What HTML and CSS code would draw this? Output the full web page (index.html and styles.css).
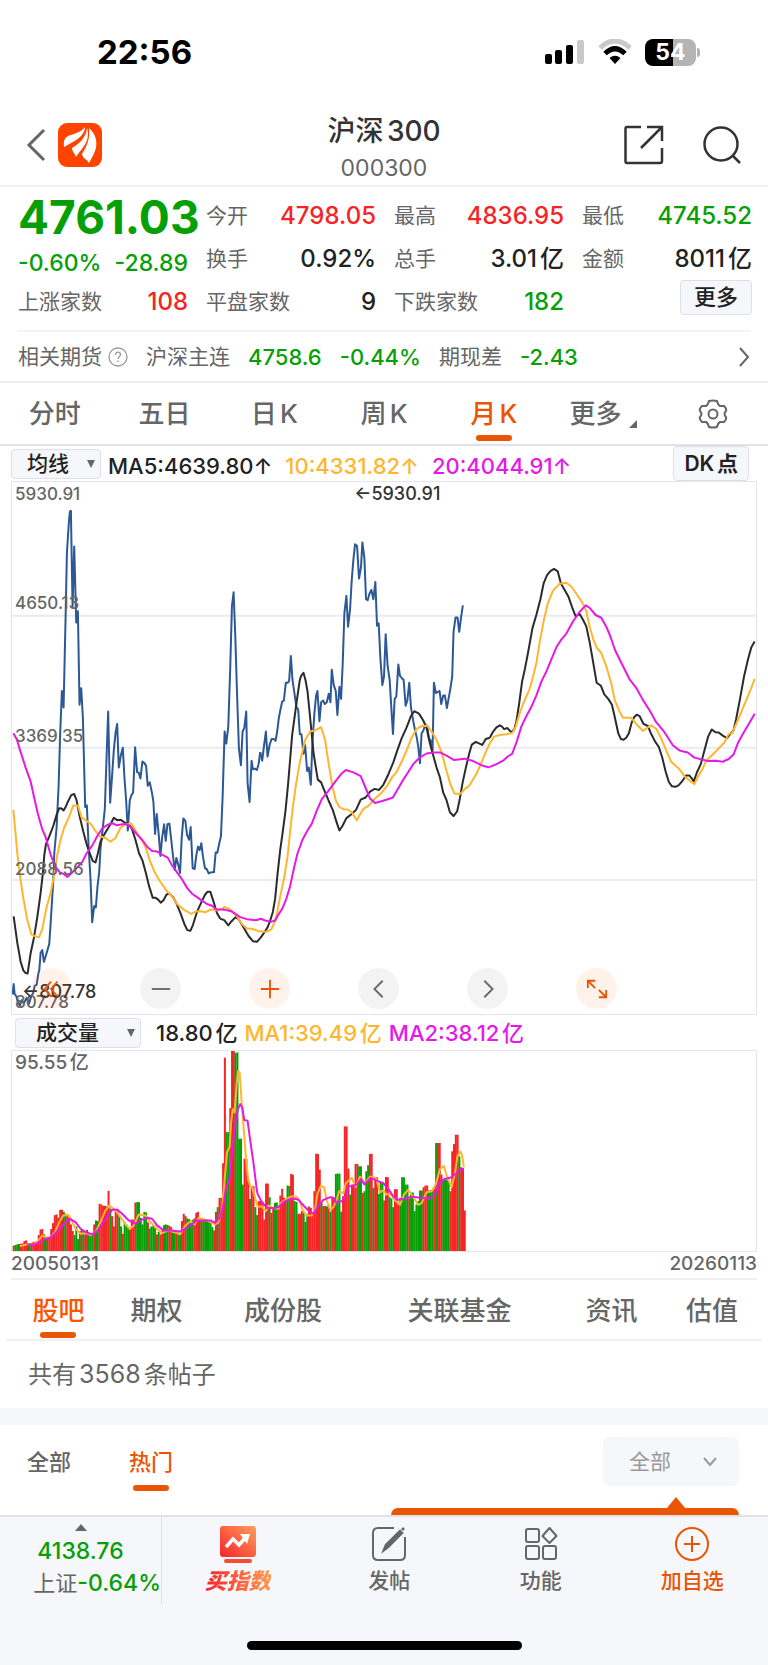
FILE: index.html
```html
<!DOCTYPE html>
<html lang="zh-CN">
<head>
    <meta charset="UTF-8">
    <meta name="viewport" content="width=device-width, initial-scale=1.0">
    <title>沪深300</title>
    <link rel="stylesheet" href="styles.css">
</head>
<body>
    <div class="status-bar">
        <span class="clock">22:56</span>
        <div class="status-icons">
            <svg width="40" height="26" viewBox="0 0 40 26">
                <rect x="0" y="15" width="7" height="10" rx="2"/>
                <rect x="10" y="11" width="7" height="14" rx="2"/>
                <rect x="21" y="6" width="7" height="19" rx="2"/>
                <rect x="32" y="1" width="7" height="24" rx="2" fill="#c9c9c9"/>
            </svg>
            <svg width="34" height="26" viewBox="0 0 34 26">
                <path d="M2 9 Q17 -5 32 9" fill="none" stroke="#c9c9c9" stroke-width="5"/>
                <path d="M7 14.500 Q17 5 27 14.500" fill="none" stroke="#000" stroke-width="5"/>
                <path d="M17 25 L11.500 19 Q17 14.500 22.500 19 Z"/>
            </svg>
            <div class="battery"><span>54</span></div>
        </div>
    </div>

    <header class="header">
        <div class="header-side">
            <button class="icon-btn" aria-label="返回">
                <svg width="20" height="34" viewBox="0 0 20 34" fill="none" stroke="#666" stroke-width="3"><path d="M18 2 L3 17 L18 32"/></svg>
            </button>
            <svg width="44" height="44" viewBox="0 0 44 44">
                <rect width="44" height="44" rx="9" fill="#ff4400"/>
                <path d="M6 24 C5 14 9 13 16 11 C21 9 25 7 27 4 C27 13 17 18 6 24 Z M14 25 C24 19 28 13 29 5 C33 18 24 25 18 34 C17 30 14 29 14 25 Z M24 31 C30 21 32 15 31 5 C38 11 40 20 37 28 C35 33 33 36 31 40 C29 36 25 36 24 31 Z" fill="#fff"/>
            </svg>
        </div>
        <div class="header-title">
            <h1>沪深300</h1>
            <p>000300</p>
        </div>
        <div class="header-side header-actions">
            <button class="icon-btn" aria-label="分享">
                <svg width="40" height="40" viewBox="0 0 40 40" fill="none" stroke="#333" stroke-width="2.500"><path d="M17 2 H3 Q1.500 2 1.500 4 V36 Q1.500 38 3 38 H36 Q38 38 38 36 V23 M23 2 H38 V16 M38 2 L17 23"/></svg>
            </button>
            <button class="icon-btn" aria-label="搜索">
                <svg width="40" height="40" viewBox="0 0 40 40" fill="none" stroke="#333" stroke-width="2.500"><circle cx="19" cy="19" r="16.500"/><path d="M31 31 L38 38"/></svg>
            </button>
        </div>
    </header>

    <section class="quote">
        <div class="quote-main">
            <strong class="price down">4761.03</strong>
            <div class="change down"><span>-0.60%</span><span>-28.89</span></div>
        </div>
        <div class="item"><span>今开</span><b class="up">4798.05</b></div>
        <div class="item"><span>最高</span><b class="up">4836.95</b></div>
        <div class="item"><span>最低</span><b class="down">4745.52</b></div>
        <div class="item"><span>换手</span><b>0.92%</b></div>
        <div class="item"><span>总手</span><b>3.01亿</b></div>
        <div class="item"><span>金额</span><b>8011亿</b></div>
        <div class="item"><span>上涨家数</span><b class="up">108</b></div>
        <div class="item"><span>平盘家数</span><b>9</b></div>
        <div class="item"><span>下跌家数</span><b class="down">182</b></div>
        <div class="item item-more"><button class="box-btn">更多</button></div>
    </section>

    <a class="futures" href="#">
        <span class="futures-name">相关期货
            <svg width="20" height="20" viewBox="0 0 20 20" fill="none" stroke="#999" stroke-width="1.300"><circle cx="10" cy="10" r="9"/><path d="M7.500 8 C7.500 4 12.500 4.500 12.500 7.500 C12.500 9.500 10 9.500 10 12 M10 13.500 V15"/></svg>
        </span>
        <span>沪深主连</span>
        <b class="down">4758.6</b>
        <b class="down">-0.44%</b>
        <span>期现差</span>
        <b class="down">-2.43</b>
        <svg class="futures-arrow" width="12" height="20" viewBox="0 0 12 20" fill="none" stroke="#666" stroke-width="2"><path d="M2 1 L10 10 L2 19"/></svg>
    </a>

    <nav class="period-tabs">
        <a href="#">分时</a>
        <a href="#">五日</a>
        <a href="#">日K</a>
        <a href="#">周K</a>
        <a href="#" class="active">月K</a>
        <a href="#" class="period-more">更多<svg width="8" height="8" viewBox="0 0 8 8"><path d="M8 0 V8 H0 Z" fill="#666"/></svg></a>
        <button class="icon-btn" aria-label="设置">
            <svg width="30" height="30" viewBox="0 0 30 30" fill="none" stroke="#666" stroke-width="2"><path d="M11 2 Q15 1 19 2 Q20 6 22 7 L26 7 Q29 10 28 12 Q25 15 28 18 Q29 20 26 23 L22 23 Q20 24 19 28 Q15 29 11 28 Q10 24 8 23 L4 23 Q1 20 2 18 Q5 15 2 12 Q1 10 4 7 L8 7 Q10 6 11 2 Z"/><circle cx="15" cy="15" r="4.500"/></svg>
        </button>
    </nav>

    <main class="charts">
        <div class="chart-head ma-head">
            <label class="select-box select-ma">
                <select aria-label="主图指标"><option>均线</option></select>
            </label>
            <span class="legend">MA5:4639.80↑</span>
            <span class="legend ma10">10:4331.82↑</span>
            <span class="legend ma20">20:4044.91↑</span>
            <button class="box-btn dk-btn">DK点</button>
        </div>

        <div class="price-chart">
            <svg class="plot" viewBox="34 4 2236 1548" preserveAspectRatio="none">
                <path class="grid-line" d="M34 393 H2270 M34 777 H2270 M34 1162 H2270"/>
                <g class="line close">
                    <polyline points="36,1495 39,1465 42,1495 47,1500 52,1520 58,1527 62,1512 70,1520 78,1505 85,1522 92,1500 98,1490 102,1470 108,1467 113,1435 116,1425 120,1374 125,1366 130,1400 137,1378 146,1348 150,1290 158,1165 161,1085 168,1010 174,890 179,730 184,612 189,660 195,400 199,210 205,120 208,90 211,88 216,368 221,192 227,413 232,380 237,652 242,604 247,690 254,950 259,945 264,1060 270,1160 275,1285 281,1238 286,1242 291,1180 296,1140 300,1070 307,1010 313,955 318,810 323,672 329,937 334,870 340,785 345,735 350,708 355,835 361,800 367,777 372,865 377,930 382,1018 388,930 393,915 398,908 404,776 410,848 415,850 420,867 426,817 432,822 437,830 442,888 448,878 455,910 459,935 464,1028 469,970 475,1030 480,1092 485,1040 491,1000 496,1048 501,1000 507,998 512,1040 517,1085 523,1133 528,1098 533,1115 539,1142 544,1040 549,983 555,990 560,1030 566,1045 571,1008 577,1128 583,1130 588,1090 593,1065 598,1075 603,1055 608,1095 614,1128 619,1130 625,1143 631,1140 641,1139 646,1082 651,1083 657,1055 662,1035 667,920 673,730 678,765 684,715 690,540 695,365 700,325 705,450 710,610 716,780 722,828 727,730 732,720 738,672 742,880 748,935 754,815 758,840 764,838 770,842 775,825 780,790"/>
                    <polyline transform="translate(660 0)" points="120,790 126,815 131,775 137,730 142,803 148,770 154,752 160,752 166,757 171,730 176,690 181,665 186,643 191,640 197,588 203,588 207,582 212,510 217,580 223,620 229,660 234,665 239,738 244,738 250,795 255,770 261,845 266,835 272,885 277,760 283,675 288,625 292,612 298,700 303,645 309,640 314,650 320,645 326,620 331,645 335,550 341,595 347,612 352,682 358,600 363,635 368,530 373,385 379,335 384,425 390,375 395,290 400,230 405,185 411,190 417,285 423,250 427,180 433,225 438,345 443,348 448,330 454,318 460,345 466,295 471,422 476,415 481,515 487,595 492,570 497,447 503,540 509,580 514,660 519,737 524,635 529,628 535,535 540,568 546,575 551,580 557,655 562,640 568,588 573,660 580,700 585,725 591,750 595,775 600,822 605,735 610,728 616,710 622,715 627,750 632,755 638,785 642,588 648,618 654,615 659,612 664,650 670,625 675,625 681,662 686,635 691,608 697,570 701,440 707,398 713,398 718,440 724,395 729,363"/>
                </g>
                <g class="line ma5-line">
                    <polyline points="39,1268 45,1310 50,1345 60,1400 68,1425 75,1433 81,1434 90,1375 100,1330 110,1270 120,1200 127,1140 131,1090 136,1058 146,1035 158,1005 168,972 176,953 183,954 189,960 196,948 203,932 212,915 221,912 228,930 237,975 248,1020 259,1060 268,1085 277,1107 285,1111 292,1085 300,1050 310,1032 322,1012 330,1000 340,981 350,988 361,987 374,996 384,998 394,1012 405,1045 416,1085 426,1105 436,1140 446,1180 457,1214 466,1214 474,1220 481,1228 490,1220 498,1205 506,1201 518,1212 528,1230 540,1258 552,1290 561,1308 570,1310 577,1295 590,1255 604,1225 614,1205 622,1196 630,1196 638,1220 650,1258 660,1275"/>
                    <polyline transform="translate(660 0)" points="0,1275 12,1279 24,1294 34,1282 46,1270 56,1277 70,1300 85,1325 98,1340 110,1342 120,1331 132,1315 142,1300 150,1280 158,1255 165,1215 172,1145 180,1075 188,1020 196,960 204,880 210,810 216,740 223,690 230,640 239,580 243,568 250,559 256,580 262,612 270,690 280,790 287,835 293,870 303,878 312,900 325,930 338,958 350,995 358,1018 367,1005 379,982 395,970 408,958 422,928 437,922 450,905 464,897 477,900 490,885 505,855 520,820 533,782 545,750 560,718 573,685 583,671 597,678 610,698 620,720 630,765 640,800 650,835 660,863 670,908 680,930 690,965 701,976 712,962 720,925 728,880 738,835 748,795 756,768 768,760 787,769 798,752 810,748"/>
                    <polyline transform="translate(1470 0)" points="0,748 10,730 20,718 30,712 36,715 43,723 53,720 65,733 74,722 80,700 88,650 97,585 105,550 115,500 128,430 140,390 152,345 162,298 172,275 182,263 193,257 204,264 214,300 225,318 236,337 248,370 258,395 270,388 280,405 290,424 300,470 310,525 321,588 334,597 344,622 356,635 367,652 376,690 386,735 394,752 402,754 410,748 418,735 426,705 434,688 442,681 450,685 462,708 475,714 484,735 496,758 508,775 518,805 528,845 538,877 547,889 558,891 568,886 580,872 590,858 600,858 608,868 613,875 622,850 634,825 645,785 656,745 667,724 678,732 688,733 700,742 713,749 722,738 732,728 740,695 752,635 764,570 776,520 786,485 796,468"/>
                </g>
                <g class="line ma10-line">
                    <polyline points="38,958 44,1020 50,1085 58,1150 68,1215 80,1278 92,1320 104,1326 115,1329 125,1305 137,1245 150,1200 160,1150 170,1090 180,1045 190,1012 205,980 218,945 232,945 243,980 258,990 272,1000 285,1020 297,1035 315,1040 330,1051 345,1040 360,1010 375,1000 393,998 405,1018 420,1040 435,1065 448,1105 462,1138 480,1168 500,1195 515,1210 530,1232 550,1248 573,1261 585,1254 600,1253 615,1256 630,1248 650,1250 660,1248"/>
                    <polyline transform="translate(660 0)" points="0,1248 13,1241 30,1248 50,1268 65,1290 80,1303 95,1304 115,1311 140,1313 153,1306 162,1288 170,1260 180,1210 192,1155 202,1095 210,1020 218,950 228,880 240,815 255,755 270,730 285,727 303,717 315,755 325,820 337,890 347,930 358,950 370,956 382,957 395,965 410,988 430,955 447,945 465,925 485,908 500,890 517,862 530,848 545,818 560,785 575,748 590,722 605,714 622,713 635,730 650,755 665,790 680,845 692,885 704,911 722,911 735,897 748,888 770,853 785,820 800,785 810,765"/>
                    <polyline transform="translate(1470 0)" points="0,765 12,745 30,740 50,738 68,734 78,715 88,682 100,650 120,605 130,570 140,530 150,470 162,408 175,355 190,320 210,300 230,297 245,308 262,332 278,355 290,380 300,425 312,465 322,487 334,500 350,540 365,590 376,640 388,668 400,690 425,690 440,708 460,728 472,720 485,712 500,722 515,750 530,785 545,818 570,840 585,860 605,876 615,883 625,862 640,838 650,815 670,797 690,777 705,762 718,737 728,735 745,698 770,640 785,605 796,577"/>
                </g>
                <g class="line ma20-line">
                    <polyline points="38,735 48,752 60,790 75,835 90,875 100,920 112,970 125,1015 135,1037 150,1088 165,1125 178,1140 190,1145 201,1153 215,1140 230,1125 245,1110 258,1085 275,1062 290,1035 305,1012 320,1002 335,997 350,1003 365,1000 380,1000 395,1012 410,1030 425,1045 440,1065 455,1078 470,1079 485,1088 502,1097 515,1120 530,1140 545,1160 560,1185 575,1202 590,1212 605,1222 620,1232 635,1237 648,1248 660,1248"/>
                    <polyline transform="translate(660 0)" points="0,1248 15,1249 35,1254 60,1270 80,1276 108,1279 122,1275 135,1280 152,1284 165,1280 175,1262 186,1246 198,1218 210,1180 222,1125 232,1085 247,1045 262,1018 275,998 290,960 305,927 325,903 350,870 365,852 377,842 400,849 422,860 435,890 450,925 465,938 487,932 518,923 535,895 550,870 565,848 580,825 600,805 620,794 640,791 660,791 680,800 703,813 735,809 760,816 785,828 805,834 810,833"/>
                    <polyline transform="translate(1470 0)" points="0,833 20,825 40,815 55,802 67,795 80,762 95,715 110,685 125,658 140,625 155,585 170,555 185,520 200,485 213,465 230,445 250,410 270,382 288,363 300,370 318,391 335,399 350,425 363,455 376,492 395,530 420,578 440,603 460,638 480,668 500,703 525,732 550,770 570,785 595,791 615,806 655,816 680,815 700,818 718,810 733,796 745,765 760,738 780,705 796,678"/>
                </g>
            </svg>
            <span class="axis axis-top">5930.91</span>
            <span class="axis axis-q1">4650.13</span>
            <span class="axis axis-q2">3369.35</span>
            <span class="axis axis-q3">2088.56</span>
            <span class="axis axis-bottom">807.78</span>
            <span class="mark mark-high">←5930.91</span>
            <span class="mark mark-low">←807.78</span>
            <div class="chart-tools">
                <button class="tool hot" aria-label="展开"><svg viewBox="0 0 24 24"><path d="M11 4 L4 12 L11 20 M18 4 L11 12 L18 20"/></svg></button>
                <button class="tool" aria-label="缩小"><svg viewBox="0 0 24 24"><path d="M2 12 H22"/></svg></button>
                <button class="tool hot" aria-label="放大"><svg viewBox="0 0 24 24"><path d="M2 12 H22 M12 2 V22"/></svg></button>
                <button class="tool" aria-label="左移"><svg viewBox="0 0 24 24"><path d="M16 3 L7 12 L16 21"/></svg></button>
                <button class="tool" aria-label="右移"><svg viewBox="0 0 24 24"><path d="M8 3 L17 12 L8 21"/></svg></button>
                <button class="tool hot" aria-label="全屏"><svg viewBox="0 0 24 24"><path d="M10 3 H2 V11 M2 3 L10 11 M14 21 H22 V13 M22 21 L14 13"/></svg></button>
            </div>
        </div>

        <div class="chart-head vol-head">
            <label class="select-box select-vol">
                <select aria-label="副图指标"><option>成交量</option></select>
            </label>
            <span class="legend">18.80亿</span>
            <span class="legend ma10">MA1:39.49亿</span>
            <span class="legend ma20">MA2:38.12亿</span>
        </div>

        <div class="vol-chart">
            <svg class="plot" viewBox="34 30 2236 602" preserveAspectRatio="none">
                <g id="volume-bars"></g>
                <g class="line ma10-line">
                    <polyline points="58,617 80,612 100,611 112,602 125,586 135,590 150,592 163,575 175,548 188,525 203,524 213,540 225,565 240,580 255,578 270,583 285,575 300,545 315,510 327,495 345,510 360,530 375,552 388,566 400,555 415,522 435,525 450,545 470,565 485,578 505,570 520,575 540,580 555,555 570,543 583,552 595,532 615,538 630,545 645,552 655,545 665,510 672,430 680,335 688,320 692,250 697,205 703,215 709,130 714,90 718,95 724,180 730,260 737,350 743,410 750,438 756,440 763,465 772,498"/>
                    <polyline transform="translate(600 0)" points="172,498 185,498 197,512 205,495 215,500 230,505 245,485 260,475 272,468 288,468 298,480 307,508 318,525 335,525 345,505 352,460 362,436 372,440 380,480 390,508 400,500 410,478 417,452 430,458 437,428 455,412 467,440 480,408 495,428 510,408 528,412 540,455 552,450 558,462 572,460 585,480 600,493 612,462 625,448 640,470 655,493 665,488 680,455 695,452 708,430 720,385 732,376 742,410 755,440 765,400 773,345 782,333 787,345 792,380"/>
                </g>
                <g class="line ma20-line">
                    <polyline points="80,613 105,612 125,598 150,592 165,578 180,562 195,545 208,535 225,545 240,565 255,575 275,582 290,572 305,550 320,528 335,508 350,507 365,520 385,540 405,550 420,540 440,532 455,535 470,555 490,570 510,570 540,573 555,565 570,555 590,540 610,540 630,540 645,547 660,530 668,500 678,440 688,415 696,320 705,250 713,205 720,190 726,200 732,238 742,240 750,300 760,370 770,450 772,460"/>
                    <polyline transform="translate(600 0)" points="172,460 185,485 200,502 220,503 235,500 250,485 265,478 280,474 295,478 310,495 325,510 340,520 355,495 370,478 390,470 400,472 410,488 425,482 435,470 445,438 460,436 470,432 483,415 493,432 512,412 530,420 550,428 565,445 580,468 595,478 615,475 635,468 660,472 685,475 705,462 715,430 735,415 755,410 770,397 785,384 792,388"/>
                </g>
            </svg>
            <span class="axis axis-vol">95.55亿</span>
        </div>
        <div class="dates"><span>20050131</span><span>20260113</span></div>
    </main>

    <nav class="info-tabs">
        <a href="#" class="active">股吧</a>
        <a href="#">期权</a>
        <a href="#">成份股</a>
        <a href="#">关联基金</a>
        <a href="#">资讯</a>
        <a href="#">估值</a>
    </nav>

    <p class="post-count">共有<span>3568</span>条帖子</p>

    <section class="posts">
        <nav class="post-tabs">
            <a href="#">全部</a>
            <a href="#" class="active">热门</a>
        </nav>
        <label class="post-filter">
            <select aria-label="帖子筛选"><option>全部</option></select>
            <svg width="16" height="10" viewBox="0 0 16 10" fill="none" stroke="#999" stroke-width="2"><path d="M2 1 L8 8 L14 1"/></svg>
        </label>
        <div class="tip"></div>
    </section>

    <footer class="bottom">
        <div class="bottom-bar">
            <a href="#" class="index-cell">
                <svg width="12" height="7" viewBox="0 0 12 7"><path d="M6 0 L12 7 H0 Z" fill="#666"/></svg>
                <b class="down">4138.76</b>
                <span>上证<b class="down">-0.64%</b></span>
            </a>
            <a href="#" class="action buy">
                <svg width="38" height="38" viewBox="0 0 38 38">
                    <defs><linearGradient id="hot" x1="0" y1="1" x2="1" y2="0"><stop offset="0" stop-color="#f5232b"/><stop offset="1" stop-color="#ffa05a"/></linearGradient></defs>
                    <rect x="1" y="1" width="36" height="31" rx="3" fill="url(#hot)"/>
                    <rect x="5" y="34" width="28" height="4" rx="2" fill="#fa4a30"/>
                    <path d="M7 22 L14 14 L20 20 L28 11" fill="none" stroke="#fff" stroke-width="3.500"/><path d="M21 9 H31 L28 19 Z" fill="#fff"/>
                </svg>
                <span>买指数</span>
            </a>
            <a href="#" class="action">
                <svg width="38" height="38" viewBox="0 0 38 38" fill="none" stroke="#666" stroke-width="2"><path d="M24 3 H8 Q3 3 3 8 V30 Q3 35 8 35 H30 Q35 35 35 30 V12"/><path d="M14 25 L16 20 L30 6 L32 8 L18 22 Z M32 5 L34 3" stroke-width="2.500" fill="#666"/></svg>
                <span>发帖</span>
            </a>
            <a href="#" class="action">
                <svg width="38" height="38" viewBox="0 0 38 38" fill="none" stroke="#666" stroke-width="2"><rect x="4" y="4" width="13" height="13" rx="2"/><rect x="4" y="21" width="13" height="13" rx="2"/><rect x="21" y="21" width="13" height="13" rx="2"/><path d="M27.500 3 L34.500 11 L27.500 18 L20.500 11 Z" stroke-linejoin="round"/></svg>
                <span>功能</span>
            </a>
            <a href="#" class="action add">
                <svg width="38" height="38" viewBox="0 0 38 38" fill="none" stroke="#ea5504" stroke-width="2"><circle cx="19" cy="19" r="16"/><path d="M11 19 H27 M19 11 V27"/></svg>
                <span>加自选</span>
            </a>
        </div>
        <div class="home-indicator"></div>
    </footer>
    <script src="chart.js"></script>
</body>
</html>
```
FILE: styles.css
```css
* {
    box-sizing: border-box;
}

body {
    margin: 0;
    background-color: #fff;
    color: #222;
    font-family: Inter, "Noto Sans CJK SC", sans-serif;
    font-size: 21px;
    line-height: 28px;
    text-autospace: normal;
}

h1, p {
    margin: 0;
}

a {
    color: #666;
    text-decoration: none;
}

b {
    font-weight: 500;
}

button, select {
    font-family: inherit;
    color: inherit;
    cursor: pointer;
}

svg {
    display: block;
    flex-shrink: 0;
}

.up {
    color: #f62424;
}

.down {
    color: #06a006;
}

.icon-btn {
    padding: 0;
    border: none;
    background: none;
}

/* status bar */
.status-bar {
    display: flex;
    justify-content: space-between;
    align-items: center;
    height: 104px;
    padding: 0 72px 0 97px;
}

.clock {
    color: #000;
    font-size: 33px;
    font-weight: 700;
}

.status-icons {
    display: flex;
    align-items: center;
    gap: 13px;
}

.battery {
    position: relative;
    width: 51px;
    height: 27px;
    border-radius: 8px;
    background: linear-gradient(90deg, #000 54%, #b4b4b4 54%);
    color: #fff;
    font-size: 23px;
    font-weight: 700;
    line-height: 27px;
    text-align: center;
}

.battery::after {
    content: "";
    position: absolute;
    left: 52px;
    top: 9px;
    width: 3px;
    height: 9px;
    border-radius: 0 3px 3px 0;
    background-color: #b4b4b4;
}

/* header */
.header {
    display: flex;
    justify-content: space-between;
    align-items: center;
    height: 83px;
    padding: 0 26px;
    border-bottom: 2px solid #f0f0f0;
}

.header-side {
    display: flex;
    align-items: center;
    flex: 1;
    gap: 12px;
}

.header-actions {
    justify-content: flex-end;
    gap: 38px;
}

.header-title {
    padding-top: 6px;
    text-align: center;
}

.header-title h1 {
    color: #333;
    font-size: 28px;
    font-weight: 500;
    line-height: 40px;
}

.header-title p {
    color: #666;
    font-size: 23px;
    line-height: 34px;
}

/* quote */
.quote {
    display: grid;
    grid-template-columns: repeat(4, minmax(0, 1fr));
    grid-auto-rows: 43px;
    column-gap: 18px;
    padding: 7px 16px 7px 18px;
}

.quote-main {
    grid-row: span 2;
}

.price {
    display: block;
    font-size: 46px;
    font-weight: 700;
    line-height: 46px;
    white-space: nowrap;
}

.change {
    display: flex;
    justify-content: space-between;
    font-size: 23px;
    font-weight: 500;
    line-height: 46px;
}

.item {
    display: flex;
    justify-content: space-between;
    align-items: center;
    color: #666;
}

.item b {
    font-size: 24px;
    color: #222;
}

.item .up {
    color: #f62424;
}

.item .down {
    color: #06a006;
}

.item-more {
    justify-content: flex-end;
    align-items: flex-start;
}

.box-btn {
    padding: 0 13px;
    border: 1px solid #dde0e6;
    border-radius: 4px;
    background-color: #f6f7fa;
    color: #222;
    font-size: 22px;
    font-weight: 500;
    line-height: 33px;
}

.futures {
    display: flex;
    align-items: center;
    gap: 18px;
    height: 51px;
    margin: 0 18px;
    border-top: 2px solid #f3f3f3;
}

.futures b {
    font-size: 22px;
}

.futures-name {
    display: flex;
    align-items: center;
    gap: 6px;
}

.futures-arrow {
    margin-left: auto;
}

/* period tabs */
.period-tabs {
    display: grid;
    grid-template-columns: repeat(7, 1fr);
    justify-items: center;
    height: 65px;
    border-top: 2px solid #eee;
    border-bottom: 2px solid #e0e2e8;
    font-size: 26px;
    font-weight: 500;
    line-height: 62px;
}

.active {
    position: relative;
    color: #ea5504;
}

.active::after {
    content: "";
    position: absolute;
    left: calc(50% - 18px);
    bottom: 4px;
    width: 36px;
    height: 6px;
    border-radius: 3px;
    background-color: #ea5504;
}

.period-more {
    display: flex;
    align-items: center;
    gap: 8px;
}

.period-more svg {
    margin-top: 20px;
}

/* charts */
.charts {
    padding: 0 11px;
}

.chart-head {
    display: flex;
    align-items: center;
    height: 35px;
}

.select-box {
    position: relative;
    display: block;
    border: 1px solid #dde0e6;
    border-radius: 4px;
    background-color: #f6f7fa;
}

.select-box::after {
    content: "";
    position: absolute;
    right: 5px;
    top: 10px;
    border: 4px solid transparent;
    border-top: 8px solid #666;
    border-bottom: none;
    pointer-events: none;
}

.select-box select {
    width: 100%;
    padding: 0 0 0 15px;
    border: none;
    background: none;
    appearance: none;
    font-size: 21px;
    font-weight: 500;
    line-height: 27px;
    height: 27px;
}

.select-ma {
    width: 90px;
    margin-right: 7px;
}

.legend {
    margin-right: 13px;
    font-size: 22px;
    font-weight: 500;
}

.ma-head .legend {
    padding-top: 5px;
}

.ma10 {
    color: #ffb62e;
}

.ma20 {
    color: #e619e6;
}

.dk-btn {
    margin-left: auto;
    margin-right: 8px;
    padding: 0 10px;
    font-size: 21px;
    font-weight: 600;
}

.price-chart, .vol-chart {
    position: relative;
    border: 1px solid #e3e5ea;
}

.price-chart {
    height: 534px;
}

.vol-chart {
    height: 202px;
}

.plot {
    width: 100%;
    height: 100%;
}

.grid-line {
    fill: none;
    stroke: #e9ebf2;
    stroke-width: 2px;
    vector-effect: non-scaling-stroke;
}

.line polyline {
    fill: none;
    stroke-width: 2px;
    stroke-linejoin: round;
    vector-effect: non-scaling-stroke;
}

.close {
    stroke: #2d5896;
}

.ma5-line {
    stroke: #2b2b2b;
}

.ma10-line {
    stroke: #ffb62e;
}

.ma20-line {
    stroke: #e619e6;
}

.axis, .mark {
    position: absolute;
    left: 3px;
    color: #666;
    font-size: 17px;
    font-weight: 500;
    line-height: 24px;
}

.axis-top {
    top: 0;
}

.axis-q1 {
    bottom: 75%;
}

.axis-q2 {
    bottom: 50%;
}

.axis-q3 {
    bottom: 25%;
}

.axis-bottom {
    bottom: 0;
}

.axis-vol {
    top: 0;
    font-size: 19px;
}

.mark {
    color: #333;
    font-size: 18px;
}

.mark-high {
    left: 46%;
    top: 0;
}

.mark-low {
    left: 10px;
    bottom: 10px;
}

.chart-tools {
    position: absolute;
    left: 19px;
    bottom: 5px;
    display: flex;
    gap: 68px;
}

.tool {
    display: flex;
    align-items: center;
    justify-content: center;
    width: 41px;
    height: 41px;
    padding: 0;
    border: none;
    border-radius: 50%;
    background-color: rgba(102, 102, 102, 0.08);
}

.tool svg {
    width: 22px;
    height: 22px;
    fill: none;
    stroke: #666;
    stroke-width: 2px;
}

.tool.hot {
    background-color: rgba(255, 85, 4, 0.08);
}

.tool.hot svg {
    stroke: #ea5504;
}

.select-vol {
    width: 126px;
    margin: 0 15px 0 4px;
}

.select-vol select {
    padding-left: 20px;
}

.vol-head .legend {
    margin-right: 7px;
}

.dates {
    display: flex;
    justify-content: space-between;
    height: 28px;
    color: #666;
    font-size: 19px;
    font-weight: 500;
    line-height: 24px;
    border-bottom: 2px solid #f0f0f0;
}

/* info tabs */
.info-tabs {
    display: grid;
    grid-template-columns: 105fr 91fr 162fr 191fr 113fr 88fr;
    justify-items: center;
    height: 61px;
    margin: 0 6px;
    padding-right: 6px;
    border-bottom: 2px solid #f0f0f0;
    font-size: 26px;
    font-weight: 500;
    line-height: 62px;
}

.info-tabs .active {
    color: #ff5500;
}

.post-count {
    padding: 0 28px;
    color: #666;
    font-size: 24px;
    line-height: 67px;
    border-bottom: 17px solid #f6f7fa;
}

.post-count span {
    font-size: 25px;
}

.posts {
    position: relative;
    display: flex;
    justify-content: space-between;
    height: 90px;
    padding: 12px 29px 0 27px;
}

.post-tabs {
    display: flex;
    gap: 58px;
    height: 58px;
    font-size: 22px;
    font-weight: 500;
    line-height: 50px;
}

.post-filter {
    display: flex;
    align-items: center;
    justify-content: space-between;
    width: 136px;
    height: 49px;
    padding: 0 21px 0 26px;
    border-radius: 6px;
    background-color: #f6f7fa;
    color: #999;
}

.post-filter select {
    padding: 0;
    border: none;
    background: none;
    appearance: none;
    font-size: 21px;
}

/* top edge of the tip bubble, the rest is below the bar */
.tip {
    position: absolute;
    right: 29px;
    bottom: 0;
    width: 348px;
    height: 7px;
    border-radius: 10px 10px 0 0;
    background-color: #ea5504;
}

.tip::before {
    content: "";
    position: absolute;
    right: 54px;
    bottom: 7px;
    border: 9px solid transparent;
    border-top: none;
    border-bottom: 11px solid #ea5504;
}

/* bottom bar */
.bottom {
    height: 150px;
    border-top: 2px solid #e0e2e8;
    background-color: #f6f7fa;
}

.bottom-bar {
    display: flex;
    height: 87px;
}

.index-cell {
    display: flex;
    flex-direction: column;
    align-items: center;
    width: 162px;
    padding-top: 7px;
    border-right: 1px solid #e0e2e8;
    font-size: 22px;
    line-height: 32px;
    white-space: nowrap;
}

.index-cell b {
    font-size: 23px;
}

.index-cell > span {
    align-self: flex-end;
}

.index-cell svg {
    margin-bottom: 4px;
}

.action {
    display: flex;
    flex: 1;
    flex-direction: column;
    align-items: center;
    padding-top: 8px;
    font-size: 21px;
    font-weight: 500;
    line-height: 36px;
}

.add {
    color: #ea5504;
}

.buy span {
    background: linear-gradient(90deg, #f5232b, #ff9a50);
    background-clip: text;
    -webkit-background-clip: text;
    color: transparent;
    font-size: 22px;
    font-style: italic;
    font-weight: 900;
}

.home-indicator {
    width: 275px;
    height: 9px;
    margin: 37px auto 0;
    border-radius: 5px;
    background-color: #000;
}
```
FILE: chart.js
```js
// monthly volume: bar height, r = up month, g = down month
var volumes = '16r 18g 20g 21g 22r 23r 30r 32r 24g 22g 24r 27r 28r 28r 48r 65r 66r 50g 40g 38r 38r 66r 84r 108r 110r 100r 124r 124r 118g 112g ' +
    '108r 106r 80r 60r 48g 74g 36g 60r 64g 62g 50r 64r 48g 45g 48g 80r 92g 90g 142r 140r 136r 136r 134r 181r 128g 105r 74r 126r 126r 106g ' +
    '74g 52r 86g 80g 72g 66r 95r 94r 146r 147g 147g 100g 80g 118g 116g 86r 68g 74g 76g 70g 50r 58g 50r 62r 78g 80g 78g 76r 72r 58g ' +
    '60g 56r 50g 48g 90r 112r 105r 98g 96g 88g 94g 98r 115r 118r 94g 95r 94g 92g 94g 93g 92g 72g 62r 118r 132g 160r 160r 264r 582r 358g ' +
    '358g 430r 602r 602r 596g 598g 338g 338g 200g 278r 278r 210r 157g 195r 195r 132g 108g 150r 152r 148r 95r 203r 203r 162g 115r 130r 145g 146g 125r 167r ' +
    '187r 160r 155r 197g 196g 232r 230r 150g 148g 112r 112r 120r 115g 88g 112g 134r 130r 115r 180r 293r 292r 245r 145g 135r 136r 134g 138r 118g 162r 160r ' +
    '232g 233g 233g 118g 165r 375r 375r 248r 170g 200r 202r 262r 262r 255g 255g 175r 180g 240g 258g 292r 292r 190g 222r 222r 172g 206g 206g 152r 223r 222r ' +
    '162g 158g 132g 186r 186r 140r 160g 222g 222g 200g 200g 158r 176g 176g 120g 140g 150g 182g 182g 192r 197r 197r 182g 184g 182g 188r 325g 325r 325r 230r ' +
    '216g 216g 214g 210g 180r 300r 322r 350r 350r 285g 252r 250r 122r';

var bars = document.getElementById('volume-bars');
var step = 5.38;

volumes.split(' ').forEach(function (item, i) {
    var height = parseInt(item);
    var rect = document.createElementNS('http://www.w3.org/2000/svg', 'rect');
    rect.setAttribute('x', 36 + i * step);
    rect.setAttribute('y', 632 - height);
    rect.setAttribute('width', 6);
    rect.setAttribute('height', height);
    rect.setAttribute('fill', item.slice(-1) === 'r' ? '#f62424' : '#06a006');
    bars.appendChild(rect);
});
```
